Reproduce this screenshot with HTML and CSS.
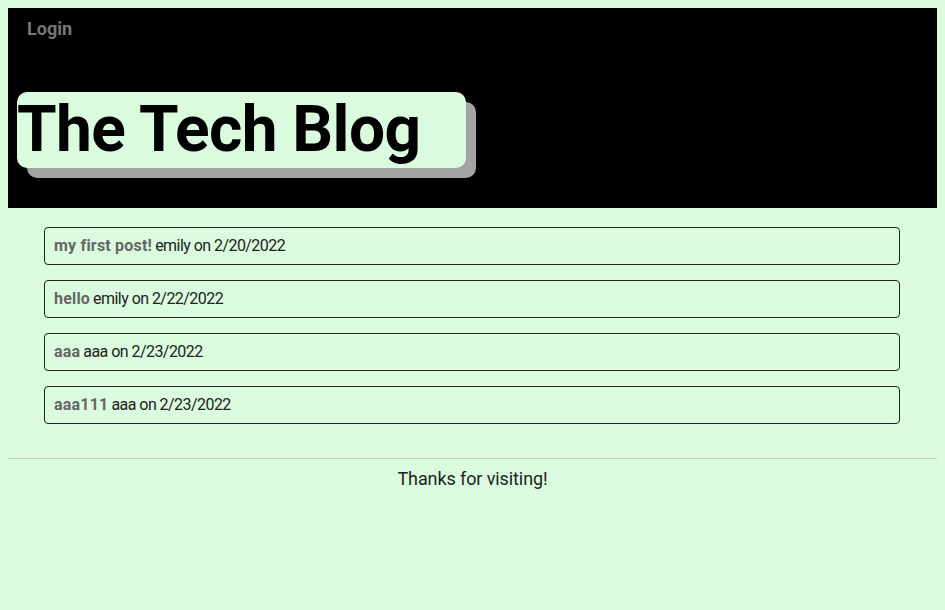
FILE: index.html
```html
<!DOCTYPE html>
<html>
<head>
<meta charset="utf-8">
<link rel="stylesheet" href="styles.css">
</head>
<body>
<header class="site-header">
  <nav class="nav"><a class="nav-link" href="#">Login</a></nav>
  <h1 class="title">The Tech Blog</h1>
</header>
<main class="posts">
  <div class="post"><span class="post-title">my first post!</span> emily on 2/20/2022</div>
  <div class="post"><span class="post-title">hello</span> emily on 2/22/2022</div>
  <div class="post"><span class="post-title">aaa</span> aaa on 2/23/2022</div>
  <div class="post"><span class="post-title">aaa111</span> aaa on 2/23/2022</div>
</main>
<hr class="divider">
<footer class="footer">Thanks for visiting!</footer>
</body>
</html>
```
FILE: styles.css
```css
html, body {
  background: #dbfbdf;
}
html {
  overflow-x: hidden;
}
body {
  margin: 8px;
  font-family: Roboto, "Liberation Sans", sans-serif;
  color: #222;
}
.site-header {
  background: #000;
  height: 200px;
  margin: 0 -8px 0 -1px;
  padding: 0 10px;
  box-sizing: border-box;
}
.nav {
  padding: 10px 10px 0;
  height: 84px;
  box-sizing: border-box;
}
.nav-link {
  color: #777;
  font-weight: 700;
  font-size: 18px;
  text-decoration: none;
  letter-spacing: 0;
}
.title {
  display: inline-block;
  margin: 0;
  width: 449px;
  height: 76px;
  box-sizing: border-box;
  background: #dbfbdf;
  border-radius: 10px;
  box-shadow: 10px 10px 0 #a3a3a3;
  font-size: 64px;
  font-weight: 700;
  line-height: 76px;
  letter-spacing: -0.6px;
  color: #000;
  padding-left: 0;
}
.posts {
  display: flex;
  flex-direction: column;
  gap: 15px;
  padding: 19px 37px 0 36px;
}
.post {
  height: 38px;
  box-sizing: border-box;
  border: 1px solid #222;
  border-radius: 4px;
  padding: 0 9px 1px;
  display: flex;
  align-items: center;
  gap: 3px;
  font-size: 16px;
  letter-spacing: -0.55px;
}
.post-title {
  color: #666;
  font-weight: 700;
  letter-spacing: 0.2px;
}
.divider {
  margin: 34px 0 0;
  border: 0;
  border-top: 1px solid #c8c8c8;
}
.footer {
  text-align: center;
  font-size: 18px;
  margin-top: 9px;
  letter-spacing: -0.1px;
}
```
